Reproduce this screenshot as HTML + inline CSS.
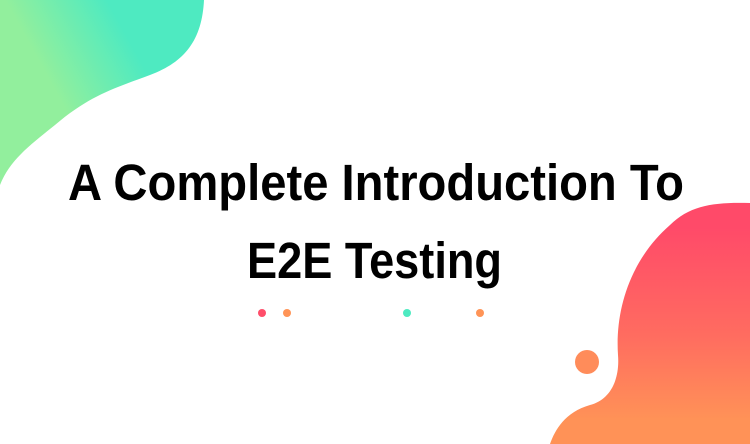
<!DOCTYPE html>
<html><head><meta charset="utf-8"><style>
html,body{margin:0;padding:0;background:#fff;width:750px;height:444px;overflow:hidden}
</style></head><body>
<svg width="750" height="444" viewBox="0 0 750 444" xmlns="http://www.w3.org/2000/svg">
<defs>
<linearGradient id="g1" x1="0" y1="0.7" x2="1" y2="0.2">
<stop offset="0.3" stop-color="#92EF9D"/><stop offset="0.7" stop-color="#4EEAC1"/></linearGradient>
<linearGradient id="g2" x1="0" y1="0" x2="0" y2="1">
<stop offset="0.1" stop-color="#FF4A69"/><stop offset="0.55" stop-color="#FF6C60"/><stop offset="0.9" stop-color="#FF9257"/></linearGradient>
</defs>
<path d="M0 0 H204 C202 40 185 62 150 75 C115 88 90 95 55 125 C30 145 10 160 0 185 Z" fill="url(#g1)"/>
<path d="M750 203 C715 202 690 205 670 225 C630 260 615 310 618 355 C620 380 610 400 590 405 C565 412 555 430 550 444 H750 Z" fill="url(#g2)"/>
<circle cx="587" cy="362" r="12" fill="#FF8C5A"/>
<g font-family="Liberation Sans, sans-serif" font-weight="bold" font-size="51" fill="#000">
<text x="68" y="200" textLength="616" lengthAdjust="spacingAndGlyphs">A Complete Introduction To</text>
<text x="247" y="278" textLength="255" lengthAdjust="spacingAndGlyphs">E2E Testing</text>
</g>
<circle cx="262" cy="313" r="4" fill="#FF4E6A"/>
<circle cx="287" cy="313" r="4" fill="#FF9457"/>
<circle cx="407" cy="313" r="4" fill="#4EEAC1"/>
<circle cx="480" cy="313" r="4" fill="#FF9457"/>
</svg>
</body></html>
